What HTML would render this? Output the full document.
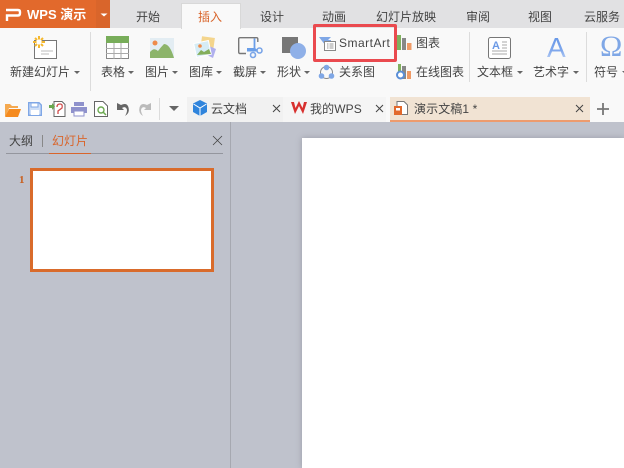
<!DOCTYPE html>
<html><head><meta charset="utf-8">
<style>
html,body{margin:0;padding:0;width:624px;height:468px;overflow:hidden;background:#bfc2cc}
body{position:relative;font-family:"Liberation Sans","Noto Sans CJK SC",sans-serif;font-size:12px;color:#444}
.a{position:absolute}
.t{position:absolute;white-space:nowrap;line-height:14px;font-size:12px;color:#444}
.tab{position:absolute;top:10px;white-space:nowrap;line-height:14px;font-size:12px;color:#444}
.c{position:absolute;width:0;height:0;border-left:3px solid transparent;border-right:3px solid transparent;border-top:3px solid #666}
.sep{position:absolute;width:1px;background:#dcdcdc}
svg{position:absolute;overflow:visible}
</style></head><body>
<div class="a" style="left:0;top:0;width:624px;height:28px;background:#e1e1e3"></div>
<div class="a" style="left:0;top:28px;width:624px;height:94px;background:#f9f9f9"></div>
<div class="a" style="left:0;top:0;width:110px;height:28px;background:#e2692c"></div>
<div class="a" style="left:96px;top:0;width:14px;height:28px;background:#d9652b"></div>
<svg style="left:0;top:0" width="110" height="28"><path d="M6 10H18Q20 10 20 12V13Q20 15.500 18 15.500H7V21" fill="none" stroke="#fff" stroke-width="2.400"/><path d="M100.500 13.500h7l-3.500 3z" fill="#fff"/></svg>
<div class="t" style="left:27px;top:8px;color:#fff;font-weight:bold;font-size:13px">WPS 演示</div>
<div class="a" style="left:181px;top:3px;width:58px;height:25px;background:#f9f9f9;border:1px solid #d8d8d8;border-bottom:0"></div>
<div class="tab" style="left:136px">开始</div>
<div class="tab" style="left:198px;color:#d9652b">插入</div>
<div class="tab" style="left:260px">设计</div>
<div class="tab" style="left:322px">动画</div>
<div class="tab" style="left:376px">幻灯片放映</div>
<div class="tab" style="left:466px">审阅</div>
<div class="tab" style="left:528px">视图</div>
<div class="tab" style="left:584px">云服务</div>

<div class="sep" style="left:90px;top:32px;height:59px"></div>
<div class="sep" style="left:469px;top:32px;height:50px"></div>
<div class="sep" style="left:586px;top:32px;height:50px"></div>

<!-- new slide -->
<svg style="left:30px;top:34px" width="30" height="28"><rect x="4.500" y="6.500" width="22" height="18" fill="#fff" stroke="#777"/><path d="M11 17h12M11 20h8" stroke="#bbb"/><circle cx="9" cy="8" r="3" fill="#fff"/><path d="M9 2v3.500M9 10.500v3.500M3 8h3.500M11.500 8h3.500M5 4l2 2M13 4l-2 2M5 12l2-2M13 12l-2-2" stroke="#f5b82e" stroke-width="2"/></svg>
<div class="t" style="left:10px;top:65px">新建幻灯片</div><div class="c" style="left:74px;top:71px"></div>
<!-- table -->
<svg style="left:106px;top:36px" width="24" height="24"><rect x=".5" y=".5" width="22" height="22" fill="#fff" stroke="#888"/><rect x="0" y="0" width="23" height="7" fill="#78ad5a"/><path d="M0 12.500h23M0 17.500h23M8 7v16M15 7v16" stroke="#aaa"/></svg>
<div class="t" style="left:101px;top:65px">表格</div><div class="c" style="left:128px;top:71px"></div>
<!-- picture -->
<svg style="left:150px;top:38px" width="24" height="20"><rect width="24" height="20" fill="#e3edf3"/><circle cx="5" cy="5" r="2.500" fill="#ee8b4a"/><path d="M0 20V14Q4 9 8 13Q11 9 14 6Q20 6 24 20z" fill="#8cb46a"/></svg>
<div class="t" style="left:145px;top:65px">图片</div><div class="c" style="left:172px;top:71px"></div>
<!-- gallery -->
<svg style="left:194px;top:36px" width="24" height="24"><rect x="7" y="1" width="13" height="15" fill="#f4d58d" transform="rotate(8 13 8)"/><path d="M15 10l7 3-3 9-6-3z" fill="#b0b0ee"/><rect x="1" y="6" width="15" height="14" fill="#d6ecf5" stroke="#fff" transform="rotate(-12 8 13)"/><circle cx="6" cy="10" r="1.800" fill="#ee8b4a"/><path d="M3 19l4-5 3 2 5-3 2 5z" fill="#84ae5a"/></svg>
<div class="t" style="left:189px;top:65px">图库</div><div class="c" style="left:216px;top:71px"></div>
<!-- screenshot -->
<svg style="left:238px;top:37px" width="26" height="24"><path d="M8 16.500H2Q.7 16.500.7 15V2Q.7.700 2 .7H18.500Q19.800.700 19.800 2V5" fill="none" stroke="#777" stroke-width="1.400"/><path d="M9 11h8l2 1.500 1 2h-11z" fill="#6a9ee8"/><path d="M16.500 1.500V14" stroke="#6a9ee8" stroke-width="1.800"/><circle cx="15" cy="18" r="2.500" fill="none" stroke="#7aa5e8" stroke-width="1.600"/><circle cx="21.500" cy="13.500" r="2.500" fill="none" stroke="#7aa5e8" stroke-width="1.600"/></svg>
<div class="t" style="left:233px;top:65px">截屏</div><div class="c" style="left:260px;top:71px"></div>
<!-- shapes -->
<svg style="left:281px;top:36px" width="28" height="24"><rect x="1" y="1" width="16" height="16" fill="#777"/><circle cx="17" cy="15" r="8" fill="#8fb0e8"/></svg>
<div class="t" style="left:277px;top:65px">形状</div><div class="c" style="left:304px;top:71px"></div>
<!-- smartart -->
<svg style="left:319px;top:37px" width="18" height="15"><path d="M0 0H12L9 3H12V5L7 9 3 4z" fill="#7fa7e6"/><rect x="5.500" y="4.500" width="11" height="9" fill="#fff" stroke="#888"/><path d="M8 7h1.500M10.500 7h4M8 9h1.500M10.500 9h4M8 11h1.500M10.500 11h4" stroke="#999"/></svg>
<div class="t" style="left:339px;top:36px;letter-spacing:.5px">SmartArt</div>
<div class="a" style="left:313px;top:24px;width:78px;height:32px;border:3px solid #ea4a4f;border-radius:2px"></div>
<!-- chart -->
<svg style="left:397px;top:35px" width="16" height="15"><rect x="0" y="0" width="4" height="15" fill="#7fb05e"/><rect x="5" y="3" width="4" height="12" fill="#888"/><rect x="10" y="8" width="4.500" height="7" fill="#ef9a66"/></svg>
<div class="t" style="left:416px;top:36px">图表</div>
<!-- relation -->
<svg style="left:318px;top:64px" width="17" height="16"><circle cx="8.500" cy="8.500" r="6" fill="none" stroke="#888"/><circle cx="8.500" cy="3.500" r="2.800" fill="#7fa7e6"/><circle cx="3.500" cy="12" r="2.800" fill="#7fa7e6"/><circle cx="13.500" cy="12" r="2.800" fill="#7fa7e6"/></svg>
<div class="t" style="left:339px;top:65px">关系图</div>
<!-- online chart -->
<svg style="left:396px;top:64px" width="16" height="16"><rect x="2" y="0" width="3" height="8" fill="#7fb05e"/><rect x="6" y="2" width="4" height="13" fill="#888"/><rect x="11" y="7" width="4" height="8" fill="#ef9a66"/><circle cx="4.500" cy="11" r="3.500" fill="#fff" stroke="#5b8fd8" stroke-width="2"/></svg>
<div class="t" style="left:416px;top:65px">在线图表</div>
<!-- textbox -->
<svg style="left:488px;top:37px" width="24" height="22"><rect x=".5" y=".5" width="22" height="21" rx="2" fill="#fff" stroke="#777"/><text x="4" y="12" font-family="Liberation Sans" font-size="11" font-weight="bold" fill="#6c9ae6">A</text><path d="M14 5h5M14 8h5M14 11h5M4 14h15M4 17h15" stroke="#aaa"/></svg>
<div class="t" style="left:477px;top:65px">文本框</div><div class="c" style="left:517px;top:71px"></div>
<!-- art -->
<svg style="left:545px;top:34px" width="24" height="26"><defs><linearGradient id="g" x1="0" y1="0" x2="0" y2="1"><stop offset="0" stop-color="#5f92e6"/><stop offset=".6" stop-color="#7fa7ec"/><stop offset="1" stop-color="#d6e2f8"/></linearGradient></defs><text x="2" y="23" font-family="Liberation Sans" font-size="28" fill="url(#g)">A</text></svg>
<div class="t" style="left:533px;top:65px">艺术字</div><div class="c" style="left:573px;top:71px"></div>
<!-- symbol -->
<div class="t" style="left:600px;top:32px;font-size:30px;line-height:30px;color:#7fa7e6;font-family:'Liberation Serif',serif">Ω</div>
<div class="t" style="left:594px;top:65px">符号</div><div class="c" style="left:622px;top:71px"></div>

<!-- quick access -->
<svg style="left:5px;top:104px" width="16" height="14"><path d="M0 0h5l2 2h6v2H4L1 12H0z" fill="#f5a94f"/><path d="M4 5h12l-3 8H0z" fill="#f58b1f"/></svg>
<svg style="left:28px;top:102px" width="14" height="14"><path d="M.7.700H11L13.300 3V13.300H.7z" fill="#cfdff7" stroke="#7fa7e6" stroke-width="1.400"/><rect x="3" y="1" width="7" height="4" fill="#fff" stroke="#7fa7e6"/><rect x="3" y="8" width="8" height="5" fill="#fff"/></svg>
<svg style="left:49px;top:101px" width="17" height="16"><path d="M5 .5H13L16 3.500V15.500H5z" fill="#fff" stroke="#666"/><path d="M0 4h3V2l3 3.500-3 3.500V7H0z" fill="#6aa84f"/><path d="M8 6Q8 3 11 3T13 7L9 10V13" fill="none" stroke="#d04a4a" stroke-width="1.300"/></svg>
<svg style="left:71px;top:102px" width="16" height="15"><rect x="3" y="0" width="10" height="4" fill="#8f92cc"/><rect x="0" y="5" width="16" height="6" fill="#8f92cc"/><rect x="3" y="9" width="10" height="5" fill="#fff" stroke="#8f92cc"/></svg>
<svg style="left:94px;top:101px" width="14" height="16"><path d="M.5.500H9L13.500 5V15.500H.5z" fill="#fff" stroke="#666"/><circle cx="7" cy="9" r="3" fill="none" stroke="#6aa84f" stroke-width="1.400"/><path d="M9 11l3 3" stroke="#6aa84f" stroke-width="1.500"/></svg>
<svg style="left:116px;top:102px" width="14" height="14"><path d="M1 1V8H8L6 6Q9 4 10.500 6.500T9 14Q14 11 12.500 5.500T5 3z" fill="#666"/></svg>
<svg style="left:138px;top:102px" width="14" height="14"><path d="M13 1V8H6L8 6Q5 4 3.500 6.500T5 14Q0 11 1.500 5.500T9 3z" fill="#bbb"/></svg>
<div class="sep" style="left:159px;top:98px;height:22px"></div>
<svg style="left:169px;top:106px" width="12" height="6"><path d="M0 0h10L5 5z" fill="#666"/></svg>

<!-- doc tabs -->
<div class="a" style="left:187px;top:97px;width:96px;height:25px;background:#f1f1f1"></div>
<svg style="left:192px;top:100px" width="16" height="17"><path d="M8 0L15 3.500V12L8 16L1 12V3.500z" fill="#2f84dc"/><path d="M1.500 4L8 8L14.500 4M8 8V16" fill="none" stroke="#fff"/></svg>
<div class="t" style="left:211px;top:102px">云文档</div>
<svg style="left:273px;top:105px" width="8" height="8"><path d="M0 0L7 7M7 0L0 7" stroke="#444"/></svg>
<div class="a" style="left:283px;top:97px;width:103px;height:25px;background:#f5f5f5"></div>
<svg style="left:291px;top:101px" width="16" height="14"><path d="M0 1L4 13L8 5L12 13L16 1H13L11.500 7L8 0L4.500 7L3 1z" fill="#d8312f"/></svg>
<div class="t" style="left:310px;top:102px;letter-spacing:.1px">我的WPS</div>
<svg style="left:376px;top:105px" width="8" height="8"><path d="M0 0L7 7M7 0L0 7" stroke="#444"/></svg>
<div class="a" style="left:390px;top:97px;width:200px;height:23px;background:#f1e3d3"></div>
<div class="a" style="left:390px;top:120px;width:200px;height:2px;background:#ed9b6e"></div>
<svg style="left:394px;top:101px" width="14" height="15"><path d="M3 .5H10L13.500 4V13.500H3z" fill="#fff" stroke="#777"/><rect x="0" y="5" width="8" height="9" fill="#e2692c"/><rect x="2" y="7" width="4" height="2.500" fill="#fff"/></svg>
<div class="t" style="left:414px;top:102px;letter-spacing:.1px">演示文稿1 *</div>
<svg style="left:576px;top:105px" width="8" height="8"><path d="M0 0L7 7M7 0L0 7" stroke="#444"/></svg>
<svg style="left:597px;top:103px" width="12" height="12"><path d="M6 0V12M0 6H12" stroke="#777" stroke-width="1.800"/></svg>

<!-- sidebar -->
<div class="a" style="left:230px;top:122px;width:1px;height:346px;background:#a6a8b0"></div>
<div class="t" style="left:9px;top:134px;color:#444">大纲</div>
<div class="a" style="left:42px;top:135px;width:1px;height:12px;background:#888"></div>
<div class="t" style="left:52px;top:134px;color:#d9652b">幻灯片</div>
<div class="a" style="left:6px;top:153px;width:217px;height:1px;background:#94969e"></div>
<div class="a" style="left:49px;top:153px;width:42px;height:1px;background:#d9652b"></div>
<svg style="left:213px;top:136px" width="10" height="10"><path d="M0 0L9 9M9 0L0 9" stroke="#444" stroke-width=".8"/></svg>
<div class="t" style="left:19px;top:173px;color:#c9601f;font-weight:bold;font-size:11px;font-family:'Liberation Serif',serif">1</div>
<div class="a" style="left:30px;top:168px;width:178px;height:98px;background:#fff;border:3px solid #d96b2b"></div>

<!-- slide -->
<div class="a" style="left:302px;top:138px;width:322px;height:330px;background:#fff;box-shadow:0 0 6px #9a9ca6"></div>
</body></html>
